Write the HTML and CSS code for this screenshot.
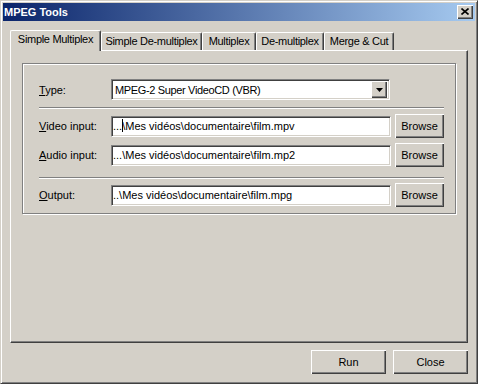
FILE: index.html
```html
<!DOCTYPE html>
<html>
<head>
<meta charset="utf-8">
<link rel="stylesheet" href="styles.css">
</head>
<body>
<div class="window">
  <div class="titlebar">
    <span class="title">MPEG Tools</span>
    <div class="close-btn">
      <svg width="8" height="7" viewBox="0 0 8 7"><path d="M0.5 0.5 L7.5 6.5 M7.5 0.5 L0.5 6.5" stroke="#000" stroke-width="1.6" fill="none"/></svg>
    </div>
  </div>
  <div class="client">
    <div class="tabs">
      <div class="tab active tab-w1">Simple Multiplex</div>
      <div class="tab tab-w2">Simple De-multiplex</div>
      <div class="tab tab-w3">Multiplex</div>
      <div class="tab tab-w4">De-multiplex</div>
      <div class="tab tab-w5">Merge &amp; Cut</div>
    </div>
    <div class="panel">
      <div class="group">
        <div class="row row-type">
          <label class="lbl"><u>T</u>ype:</label>
          <div class="combo">
            <span class="combo-text">MPEG-2 Super VideoCD (VBR)</span>
            <div class="combo-btn"><svg width="7" height="4" viewBox="0 0 7 4"><path d="M0 0 H7 L3.5 4 Z" fill="#000"/></svg></div>
          </div>
        </div>
        <div class="sep sep-1"></div>
        <div class="row">
          <label class="lbl"><u>V</u>ideo input:</label>
          <div class="field">...<span class="caret"></span>\Mes vidéos\documentaire\film.mpv</div>
          <div class="btn browse">Browse</div>
        </div>
        <div class="row row-gap">
          <label class="lbl"><u>A</u>udio input:</label>
          <div class="field">...\Mes vidéos\documentaire\film.mp2</div>
          <div class="btn browse">Browse</div>
        </div>
        <div class="sep sep-2"></div>
        <div class="row">
          <label class="lbl"><u>O</u>utput:</label>
          <div class="field">..\Mes vidéos\documentaire\film.mpg</div>
          <div class="btn browse">Browse</div>
        </div>
      </div>
    </div>
    <div class="footer">
      <div class="btn action">Run</div>
      <div class="btn action">Close</div>
    </div>
  </div>
</div>
</body>
</html>
```

FILE: styles.css
```css
* { box-sizing: border-box; }
html, body { margin: 0; padding: 0; }
body {
  width: 478px;
  height: 384px;
  font-family: "Liberation Sans", Arial, sans-serif;
  font-size: 11px;
  color: #000;
  background: #d4d0c8;
  overflow: hidden;
}
.window {
  width: 478px;
  height: 384px;
  background: #d4d0c8;
  border: 1px solid;
  border-color: #d4d0c8 #404040 #404040 #d4d0c8;
  box-shadow: inset 1px 1px #fff, inset -1px -1px #808080;
  padding: 2px;
  display: flex;
  flex-direction: column;
}
.titlebar {
  height: 18px;
  background: linear-gradient(to right, #0a246a, #a6caf0);
  display: flex;
  align-items: center;
  justify-content: space-between;
  padding: 0 2px 0 1px;
}
.title {
  color: #fff;
  font-weight: bold;
  font-size: 11px;
  line-height: 14px;
}
.close-btn {
  width: 16px;
  height: 14px;
  background: #d4d0c8;
  box-shadow: inset 1px 1px #fff, inset -1px -1px #404040, inset -2px -2px #808080;
  display: flex;
  align-items: center;
  justify-content: center;
  padding-bottom: 1px;
}
.close-btn svg { display: block; }
.client {
  flex: 1;
  display: flex;
  flex-direction: column;
  padding: 8px 7px 0;
}
.tabs {
  height: 21px;
  display: flex;
  align-items: flex-end;
  padding-left: 2px;
  position: relative;
  z-index: 1;
}
.tab {
  height: 18px;
  padding: 0;
  line-height: 16px;
  text-align: center;
  letter-spacing: -0.3px;
  white-space: nowrap;
  border-left: 1px solid #fff;
  border-top: 1px solid #fff;
  border-right: 1px solid #404040;
  box-shadow: inset -1px 0 #808080;
  border-radius: 2px 2px 0 0;
  background: #d4d0c8;
  flex: none;
}
.tab-w1 { width: 91px; }
.tab-w2 { width: 101px; }
.tab-w3 { width: 54px; }
.tab-w4 { width: 68px; }
.tab-w5 { width: 70px; }
.tab.active {
  height: 21px;
  margin: 0 0 -1px -2px;
  line-height: 17px;
  position: relative;
  z-index: 2;
}
.panel {
  height: 293px;
  border-top: 1px solid #fff;
  border-left: 1px solid #fff;
  border-right: 1px solid #404040;
  border-bottom: 1px solid #404040;
  box-shadow: inset -1px -1px #808080;
  padding: 12px 11px 0;
}
.group {
  height: 151px;
  border: 1px solid #808080;
  box-shadow: inset 1px 1px #fff, 1px 1px #fff;
  padding: 15px 11px 0 16px;
  display: flex;
  flex-direction: column;
}
.row {
  display: flex;
  align-items: center;
  height: 24px;
}
.row-type { height: 21px; }
.row-gap { margin-top: 5px; }
.lbl {
  width: 72px;
  white-space: nowrap;
}
.lbl u { text-decoration: underline; text-underline-offset: 1px; }
.combo {
  width: 279px;
  height: 21px;
  background: #fff;
  border: 1px solid;
  border-color: #808080 #fff #fff #808080;
  box-shadow: inset 1px 1px #404040, inset -1px -1px #d4d0c8;
  display: flex;
  align-items: center;
  justify-content: space-between;
  padding: 0 2px;
}
.combo-text { padding-left: 1px; letter-spacing: -0.35px; }
.combo-btn {
  width: 16px;
  height: 17px;
  background: #d4d0c8;
  box-shadow: inset 1px 1px #fff, inset -1px -1px #404040, inset -2px -2px #808080;
  display: flex;
  align-items: center;
  justify-content: center;
}
.combo-btn svg { display: block; }
.field {
  width: 280px;
  height: 21px;
  background: #fff;
  border: 1px solid;
  border-color: #808080 #fff #fff #808080;
  box-shadow: inset 1px 1px #404040, inset -1px -1px #d4d0c8;
  padding: 0 2px 0 1px;
  line-height: 19px;
  white-space: nowrap;
  overflow: hidden;
}
.caret {
  display: inline-block;
  width: 1px;
  height: 13px;
  background: #000;
  vertical-align: -2px;
  margin-right: -1px;
}
.btn {
  background: #d4d0c8;
  box-shadow: inset 1px 1px #fff, inset -1px -1px #404040, inset -2px -2px #808080;
  display: flex;
  align-items: center;
  justify-content: center;
  padding-bottom: 1px;
}
.browse {
  width: 49px;
  height: 24px;
  margin-left: 4px;
}
.sep {
  height: 2px;
  border-top: 1px solid #808080;
  border-bottom: 1px solid #fff;
}
.sep-1 { margin: 7px 0 5px; }
.sep-2 { margin: 10px 0 4px; }
.footer {
  display: flex;
  justify-content: flex-end;
  gap: 7px;
  margin-top: 7px;
}
.action {
  width: 75px;
  height: 24px;
}
```
